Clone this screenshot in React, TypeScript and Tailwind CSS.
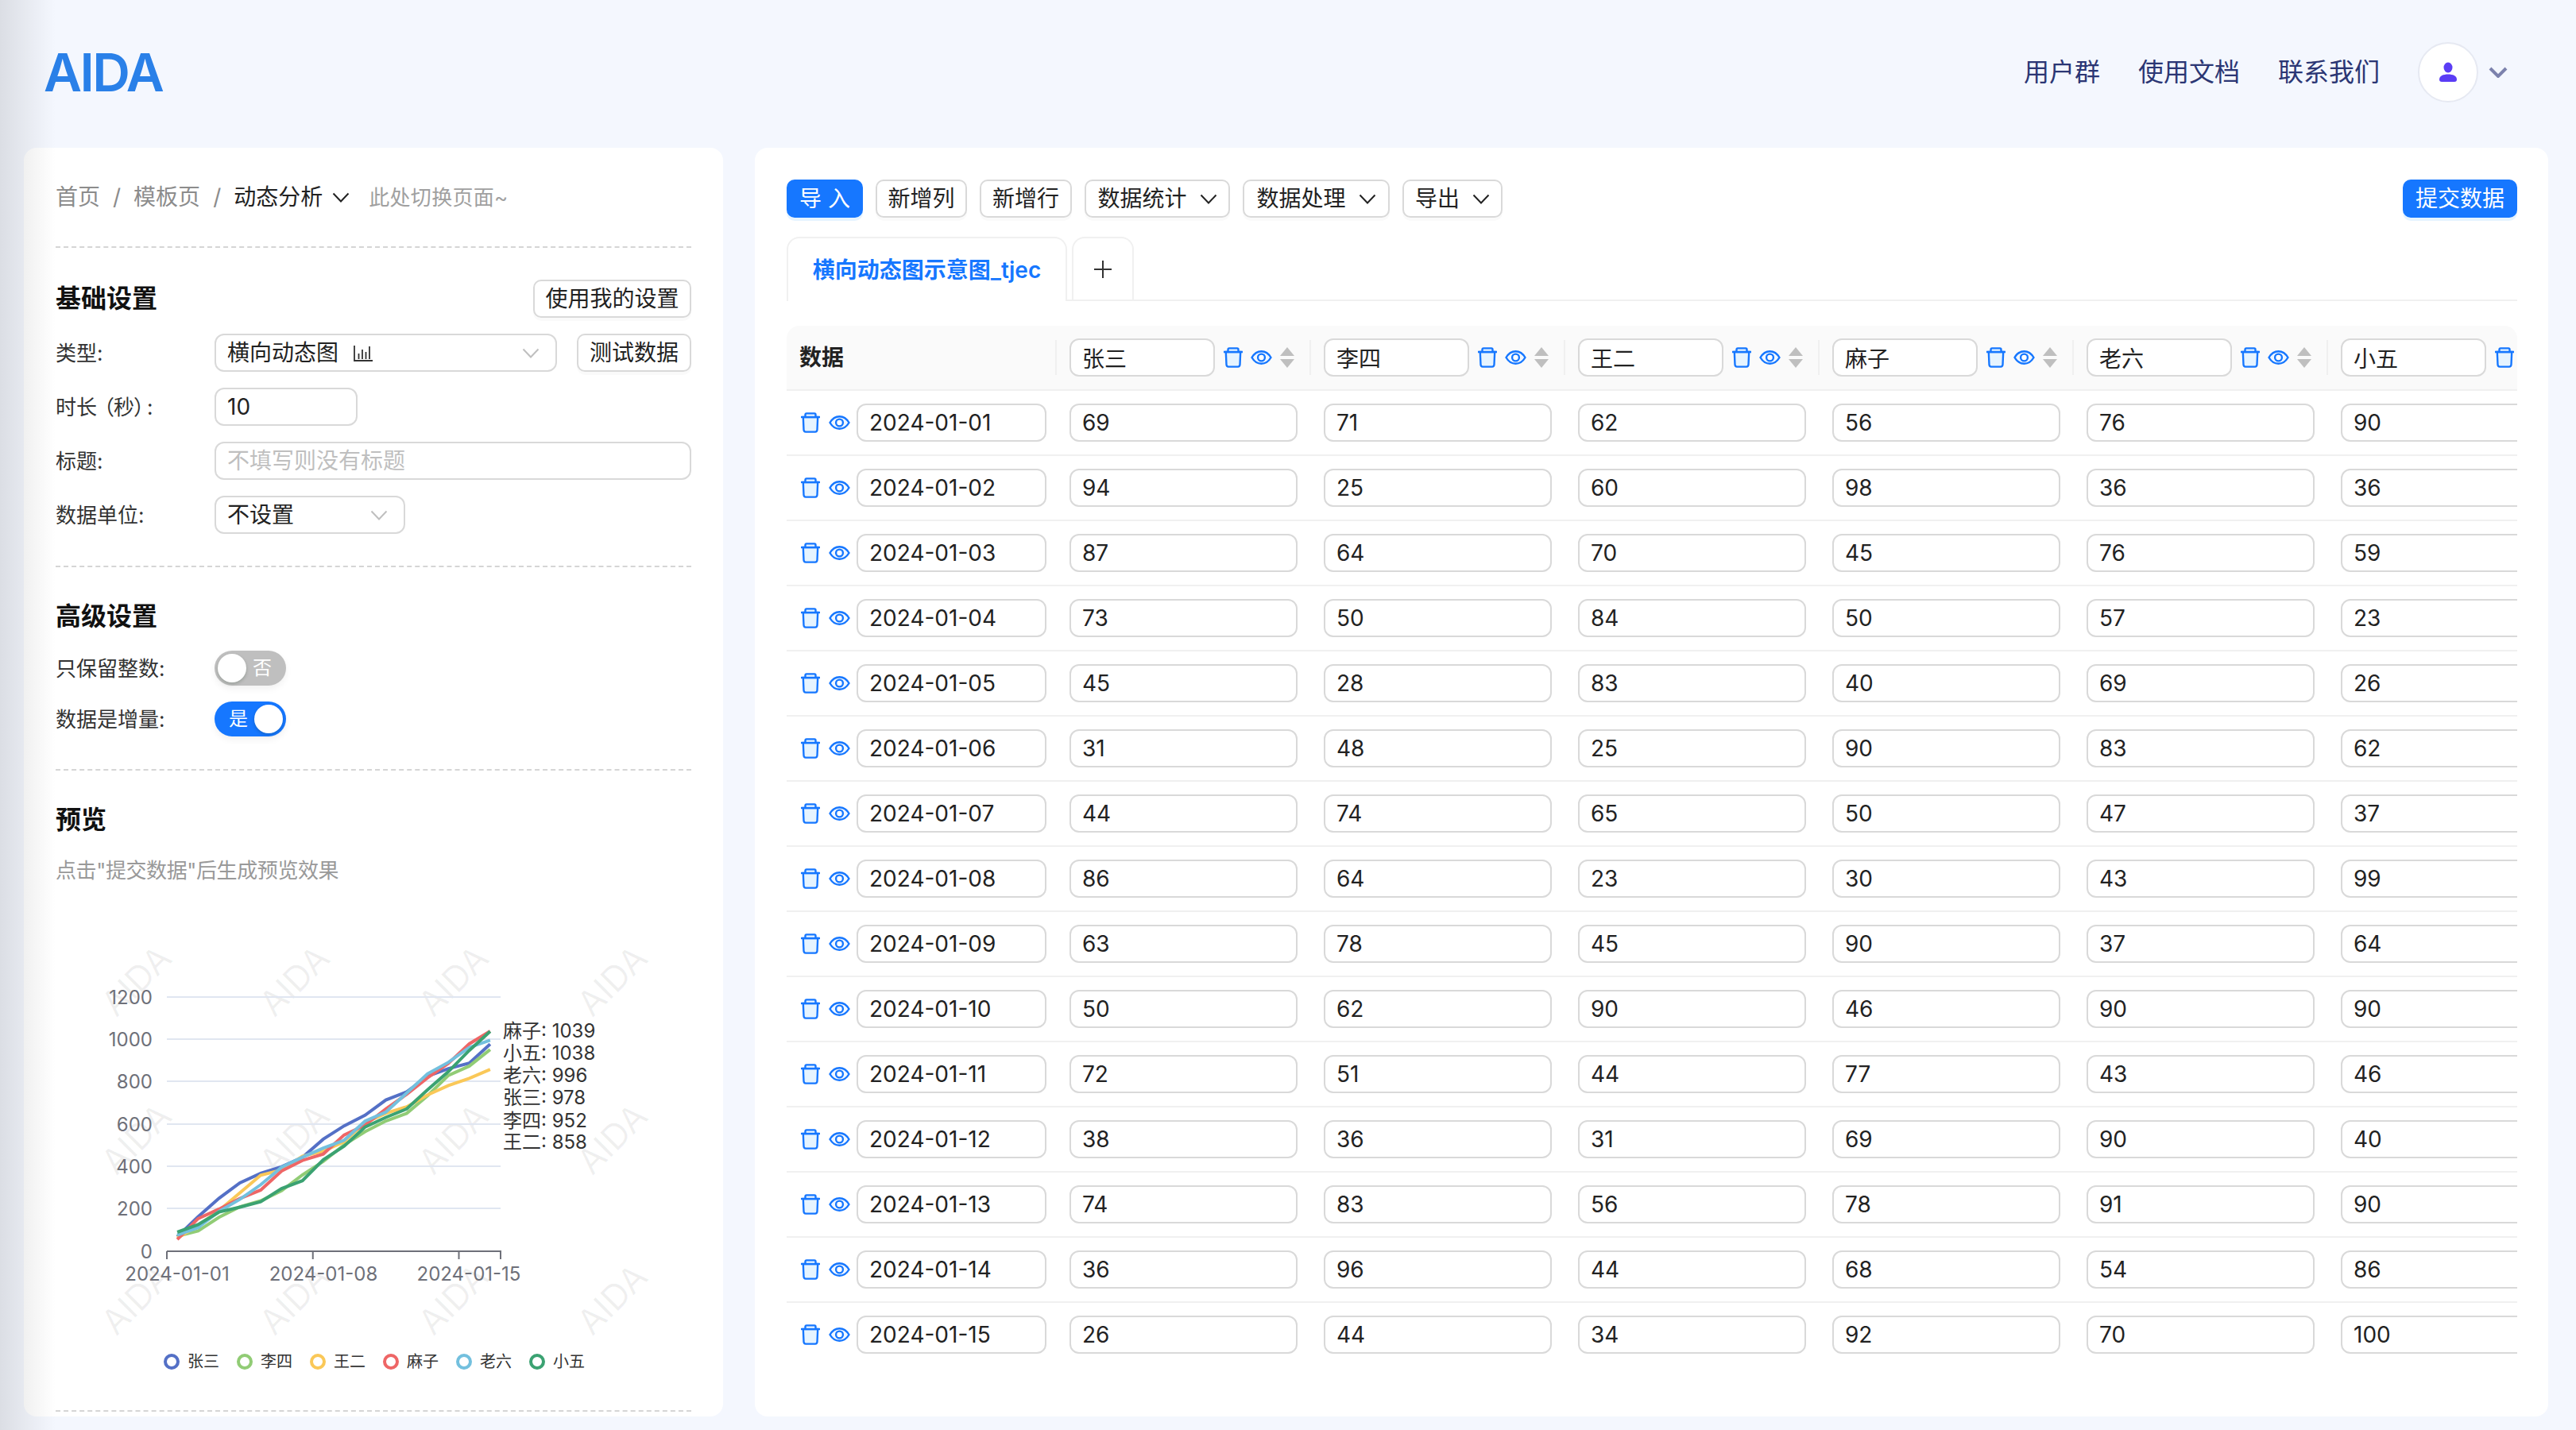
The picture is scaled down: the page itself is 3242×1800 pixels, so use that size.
import React from 'react';

const columns = ['张三', '李四', '王二', '麻子', '老六', '小五'];

const rows: [string, number[]][] = [
  ['2024-01-01', [69, 71, 62, 56, 76, 90]],
  ['2024-01-02', [94, 25, 60, 98, 36, 36]],
  ['2024-01-03', [87, 64, 70, 45, 76, 59]],
  ['2024-01-04', [73, 50, 84, 50, 57, 23]],
  ['2024-01-05', [45, 28, 83, 40, 69, 26]],
  ['2024-01-06', [31, 48, 25, 90, 83, 62]],
  ['2024-01-07', [44, 74, 65, 50, 47, 37]],
  ['2024-01-08', [86, 64, 23, 30, 43, 99]],
  ['2024-01-09', [63, 78, 45, 90, 37, 64]],
  ['2024-01-10', [50, 62, 90, 46, 90, 90]],
  ['2024-01-11', [72, 51, 44, 77, 43, 46]],
  ['2024-01-12', [38, 36, 31, 69, 90, 40]],
  ['2024-01-13', [74, 83, 56, 78, 91, 90]],
  ['2024-01-14', [36, 96, 44, 68, 54, 86]],
  ['2024-01-15', [26, 44, 34, 92, 70, 100]],
];

const seriesColors = ['#5470c6', '#91cc75', '#fac858', '#ee6666', '#73c0de', '#3ba272'];
// the chart runs one step past the table (hidden 16th date)
const finalTotals = [978, 952, 858, 1039, 996, 1038];

const endLabels = [
  ['麻子: 1039', 1297],
  ['小五: 1038', 1325],
  ['老六: 996', 1353],
  ['张三: 978', 1381],
  ['李四: 952', 1410],
  ['王二: 858', 1437],
] as const;

const pointX = (i: number) => 210 + 26.25 * (i + 0.5);
const pointY = (v: number) => 1575 - v * 0.26667;

const seriesPoints = (col: number) => {
  let sum = 0;
  const pts = rows.map(([, vals], i) => {
    sum += vals[col];
    return `${pointX(i)},${pointY(sum)}`;
  });
  pts.push(`${pointX(15)},${pointY(finalTotals[col])}`);
  return pts.join(' ');
};

const Chevron = ({ className = 'text-[#333]' }: { className?: string }) => (
  <svg width="22" height="13" viewBox="0 0 22 13" fill="none" className={className}>
    <path d="M1.5 1.5 L11 11.5 L20.5 1.5" stroke="currentColor" strokeWidth="2" />
  </svg>
);

const TrashIcon = () => (
  <svg width="24" height="26" viewBox="0 0 24 26" fill="none" stroke="#1677ff" strokeWidth="2.4" className="shrink-0">
    <path d="M2.8 6 L3.5 22 Q3.7 24.6 6 24.6 H18 Q20.3 24.6 20.5 22 L21.2 6 Z" fill="#e6f4ff" />
    <path d="M5.5 6 V3 Q5.5 1.4 7 1.4 H17 Q18.5 1.4 18.5 3 V6" fill="#e6f4ff" />
    <path d="M0 6 H24" />
  </svg>
);

const EyeIcon = () => (
  <svg width="27" height="18" viewBox="0 0 27 18" fill="none" stroke="#1677ff" strokeWidth="2.4" className="shrink-0">
    <path d="M1.5 9 C5 3 9 1.2 13.5 1.2 C18 1.2 22 3 25.5 9 C22 15 18 16.8 13.5 16.8 C9 16.8 5 15 1.5 9 Z" fill="#f0f7ff" />
    <circle cx="13.5" cy="9" r="4.4" fill="#fff" />
  </svg>
);

const SortIcon = () => (
  <svg width="18" height="26" viewBox="0 0 18 26" className="shrink-0" fill="#bfbfbf">
    <path d="M9 0 L18 11 H0 Z" />
    <path d="M0 15 H18 L9 26 Z" />
  </svg>
);

const BarsIcon = () => (
  <svg width="24" height="24" viewBox="0 0 24 24" fill="none" stroke="#333" strokeWidth="1.8" className="ml-[19px]">
    <path d="M1 3 V22 H24" />
    <path d="M6.5 20 V13 M11 20 V8 M15.5 20 V11 M20 20 V4" />
  </svg>
);

const TextInput = ({ value, className = '' }: { value: string; className?: string }) => (
  <input
    readOnly
    value={value}
    className={`h-[48px] shrink-0 rounded-[12px] border-2 border-[#d9d9d9] bg-white px-[14px] text-[28px] text-[#222] outline-none ${className}`}
  />
);

const Btn = ({ label, primary, chevron, className = '' }: { label: string; primary?: boolean; chevron?: boolean; className?: string }) => (
  <button
    className={`flex h-[48px] shrink-0 items-center justify-center rounded-[10px] text-[28px] ${
      primary
        ? 'bg-[#1677ff] text-white shadow-[0_4px_0_rgba(5,145,255,0.1)]'
        : 'border-2 border-[#d9d9d9] bg-white text-[#222] shadow-[0_4px_0_rgba(0,0,0,0.02)]'
    } ${className}`}
  >
    {label}
    {chevron && <Chevron className="ml-[16px] text-[#222]" />}
  </button>
);

const Dashed = ({ className = '' }: { className?: string }) => (
  <div className={`border-t-2 border-dashed border-[#d5d5d5] ${className}`} />
);

const FormRow = ({ label, children }: { label: React.ReactNode; children: React.ReactNode }) => (
  <div className="flex items-center">
    <div className="w-[200px] shrink-0 text-[26px] text-[#333]">{label}</div>
    {children}
  </div>
);

const Toggle = ({ on }: { on?: boolean }) => (
  <div
    className={`flex h-[44px] w-[90px] items-center rounded-full px-[4px] text-[24px] text-white shadow-[0_4px_8px_rgba(0,0,0,0.06)] ${
      on ? 'justify-end bg-[#1677ff]' : 'bg-[#bfbfbf]'
    }`}
  >
    {on && <span className="mr-[8px]">是</span>}
    <span className="h-[36px] w-[36px] rounded-full bg-white shadow-[0_2px_4px_rgba(0,35,11,0.2)]" />
    {!on && <span className="ml-[8px]">否</span>}
  </div>
);

const Preview = () => (
  <svg viewBox="70 1130 800 640" className="mt-[16px] block h-[640px] w-[800px] shrink-0">
    {[1237, 1436, 1638].map((cy) =>
      [174, 373, 573, 773].map((cx) => (
        <text key={`${cx}-${cy}`} x={cx} y={cy} textAnchor="middle" dominantBaseline="middle" fontSize="44" fill="#000" fillOpacity="0.06" transform={`rotate(-45 ${cx} ${cy})`}>
          AIDA
        </text>
      )),
    )}
    {[1255, 1308, 1361, 1415, 1468, 1521].map((y) => (
      <line key={y} x1="210" x2="630" y1={y} y2={y} stroke="#e0e6f1" strokeWidth="2" />
    ))}
    <path d="M210 1575 H631 M210 1575 V1585 M393.75 1575 V1585 M577.5 1575 V1585 M630 1575 V1585" stroke="#6e7079" strokeWidth="2" fill="none" />
    {[
      ['1200', 1255],
      ['1000', 1308],
      ['800', 1361],
      ['600', 1415],
      ['400', 1468],
      ['200', 1521],
      ['0', 1575],
    ].map(([t, y]) => (
      <text key={t} x="192" y={y} textAnchor="end" dominantBaseline="central" fontSize="24" fill="#6e7079">
        {t}
      </text>
    ))}
    {[
      ['2024-01-01', 223],
      ['2024-01-08', 407],
      ['2024-01-15', 590],
    ].map(([t, x]) => (
      <text key={t} x={x} y="1603" textAnchor="middle" dominantBaseline="central" fontSize="24" fill="#6e7079">
        {t}
      </text>
    ))}
    {columns.map((name, i) => (
      <polyline key={name} points={seriesPoints(i)} fill="none" stroke={seriesColors[i]} strokeWidth="4" />
    ))}
    {endLabels.map(([t, y]) => (
      <text key={t} x="633" y={y} dominantBaseline="central" fontSize="24" fill="#333">
        {t}
      </text>
    ))}
    {columns.map((name, i) => (
      <g key={name}>
        <circle cx={216 + i * 92} cy="1714" r="8" fill="#fff" stroke={seriesColors[i]} strokeWidth="4" />
        <text x={236 + i * 92} y="1714" dominantBaseline="central" fontSize="20" fill="#333">
          {name}
        </text>
      </g>
    ))}
  </svg>
);

const LeftPanel = () => (
  <aside className="flex w-[880px] shrink-0 flex-col overflow-hidden rounded-[16px] bg-white px-[40px] pt-[40px]">
    <div className="flex h-[44px] items-center text-[28px] text-[#8c8c8c]">
      <span>首页</span>
      <span className="mx-[16px]">/</span>
      <span>模板页</span>
      <span className="mx-[16px]">/</span>
      <span className="text-[#222]">动态分析</span>
      <Chevron className="ml-[12px] text-[#222]" />
      <span className="ml-[24px] text-[26px] tracking-[0.3px] text-[#a0a0a0]">此处切换页面~</span>
    </div>
    <Dashed className="mt-[40px]" />

    <div className="mt-[40px] flex items-center justify-between">
      <h2 className="text-[32px] font-bold text-[#111]">基础设置</h2>
      <Btn label="使用我的设置" className="w-[199px]" />
    </div>
    <div className="mt-[20px] flex flex-col gap-[20px]">
      <div className="flex items-center">
        <div className="w-[200px] shrink-0 text-[26px] text-[#333]">类型:</div>
        <div className="flex h-[48px] w-[431px] items-center rounded-[12px] border-2 border-[#d9d9d9] pl-[14px] pr-[20px] text-[28px] text-[#222]">
          横向动态图
          <BarsIcon />
          <Chevron className="ml-auto text-[#bfbfbf]" />
        </div>
        <Btn label="测试数据" className="ml-auto w-[144px]" />
      </div>
      <FormRow
        label={
          <>
            时长<span className="ml-[8px] mr-[3px] [font-feature-settings:'palt']">（秒）</span>:
          </>
        }
      >
        <TextInput value="10" className="w-[180px]" />
      </FormRow>
      <FormRow label="标题:">
        <input
          readOnly
          placeholder="不填写则没有标题"
          className="h-[48px] w-[600px] rounded-[12px] border-2 border-[#d9d9d9] px-[14px] text-[28px] outline-none placeholder:text-[#bfbfbf]"
        />
      </FormRow>
      <FormRow label="数据单位:">
        <div className="flex h-[48px] w-[240px] items-center justify-between rounded-[12px] border-2 border-[#d9d9d9] pl-[14px] pr-[20px] text-[28px] text-[#222]">
          不设置
          <Chevron className="text-[#bfbfbf]" />
        </div>
      </FormRow>
    </div>
    <Dashed className="mt-[40px]" />

    <h2 className="mt-[40px] flex h-[44px] items-center text-[32px] font-bold text-[#111]">高级设置</h2>
    <div className="mt-[21px] flex flex-col gap-[20px]">
      <FormRow label="只保留整数:">
        <Toggle />
      </FormRow>
      <FormRow label="数据是增量:">
        <Toggle on />
      </FormRow>
    </div>
    <Dashed className="mt-[41px]" />

    <h2 className="mt-[40px] flex h-[44px] items-center text-[32px] font-bold text-[#111]">预览</h2>
    <p className="mt-[24px] text-[26px] leading-[36px] tracking-[-0.4px] text-[#999]">点击"提交数据"后生成预览效果</p>
    <Preview />
    <Dashed className="mt-[5px] shrink-0" />
  </aside>
);

const DataTable = () => (
  <div className="mt-[31px] overflow-hidden rounded-t-[16px]">
    <div className="flex h-[82px] w-[2260px] border-b-2 border-[#f0f0f0] bg-[#fafafa]">
      <div className="flex w-[340px] items-center justify-between pl-[16px]">
        <span className="text-[28px] font-bold text-[#222]">数据</span>
        <div className="h-[44px] w-[2px] bg-[#f0f0f0]" />
      </div>
      {columns.map((name) => (
        <div key={name} className="flex w-[320px] items-center pl-[16px]">
          <TextInput value={name} className="w-[183px]" />
          <div className="ml-[11px] flex items-center gap-[10px]">
            <TrashIcon />
            <EyeIcon />
            <SortIcon />
          </div>
          <div className="ml-auto h-[44px] w-[2px] bg-[#f0f0f0]" />
        </div>
      ))}
    </div>
    {rows.map(([date, vals], r) => (
      <div key={date} className={`flex h-[82px] w-[2260px] ${r < rows.length - 1 ? 'border-b-2 border-[#f0f0f0]' : 'pb-[2px]'}`}>
        <div className="flex w-[340px] items-center pl-[18px]">
          <TrashIcon />
          <div className="ml-[11px]">
            <EyeIcon />
          </div>
          <TextInput value={date} className="ml-[8px] w-[239px]" />
        </div>
        {vals.map((v, c) => (
          <div key={c} className="flex w-[320px] items-center pl-[16px]">
            <TextInput value={String(v)} className="w-[287px]" />
          </div>
        ))}
      </div>
    ))}
  </div>
);

const RightPanel = () => (
  <main className="flex min-w-0 flex-1 flex-col rounded-[16px] bg-white pl-[40px] pr-[39px] pt-[40px]">
    <div className="flex items-center gap-[16px]">
      <Btn label="导 入" primary className="w-[96px]" />
      <Btn label="新增列" className="w-[115px]" />
      <Btn label="新增行" className="w-[116px]" />
      <Btn label="数据统计" chevron className="w-[183px]" />
      <Btn label="数据处理" chevron className="w-[185px]" />
      <Btn label="导出" chevron className="w-[126px]" />
      <Btn label="提交数据" primary className="ml-auto w-[144px]" />
    </div>
    <div className="mt-[24px] flex h-[81px] gap-[6px] border-b-2 border-[#f0f0f0]">
      <div className="flex h-[81px] w-[353px] items-center justify-center rounded-t-[16px] border-2 border-b-0 border-[#f0f0f0] bg-white text-[28px] font-semibold text-[#1677ff]">
        横向动态图示意图_tjec
      </div>
      <div className="flex h-[79px] w-[78px] items-center justify-center rounded-t-[16px] border-2 border-b-0 border-[#f0f0f0]">
        <svg width="24" height="24" viewBox="0 0 24 24" stroke="#333" strokeWidth="2">
          <path d="M12 1 V23 M1 12 H23" />
        </svg>
      </div>
    </div>
    <DataTable />
  </main>
);

const App: React.FC = () => (
  <div className="relative flex h-screen w-full flex-col overflow-hidden bg-[#f4f7fe] font-['Inter','Noto_Sans_CJK_SC',sans-serif]">
    <div className="pointer-events-none absolute inset-y-0 left-0 z-10 w-[70px] bg-linear-to-r from-[rgba(0,0,0,0.1)] to-transparent" />

    <header className="flex h-[182px] shrink-0 items-center justify-between pl-[55px] pr-[86px]">
      <div className="text-[66px] font-semibold tracking-[-2.5px] text-[#2a80e8]">AIDA</div>
      <div className="flex items-center text-[32px] text-[#2b3674]">
        <span>用户群</span>
        <span className="ml-[48px]">使用文档</span>
        <span className="ml-[48px]">联系我们</span>
        <div className="ml-[48px] flex h-[76px] w-[76px] items-center justify-center rounded-full border-2 border-[#e6e9f2] bg-white">
          <svg width="22" height="26" viewBox="0 0 22 26" fill="#5b3df5">
            <ellipse cx="11" cy="7" rx="5.5" ry="6.5" />
            <path d="M0 22 C0 17.5 5 15.5 11 15.5 C17 15.5 22 17.5 22 22 Q22 25 19 25 H3 Q0 25 0 22 Z" />
          </svg>
        </div>
        <svg width="24" height="14" viewBox="0 0 24 14" fill="none" stroke="#7c82ad" strokeWidth="4" className="ml-[13px]">
          <path d="M2 2 L12 12 L22 2" />
        </svg>
      </div>
    </header>

    <div className="mt-[4px] flex h-[1597px] shrink-0 gap-[40px] pl-[30px] pr-[35px]">
      <LeftPanel />
      <RightPanel />
    </div>
  </div>
);

export default App;
